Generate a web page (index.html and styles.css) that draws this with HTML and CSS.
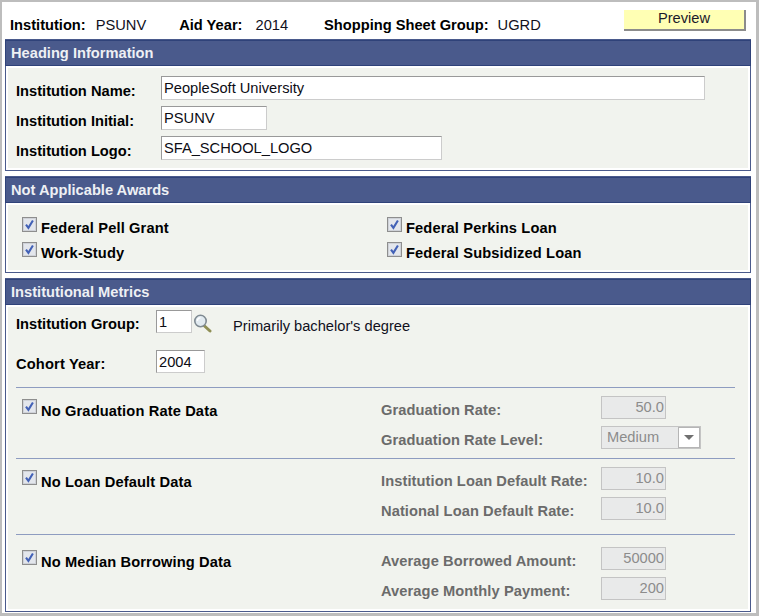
FILE: index.html
```html
<!DOCTYPE html>
<html lang="en">
<head>
  <meta charset="UTF-8" />
  <title>Shopping Sheet</title>
  <link rel="stylesheet" href="styles.css">
</head>
<body>
<svg width="0" height="0" class="defs">
  <symbol id="check" viewBox="0 0 15 15">
    <rect x="0.5" y="0.5" width="14" height="14" fill="#e3e6ec" stroke="#8e8e8e"/>
    <rect x="1.5" y="1.5" width="12" height="12" fill="none" stroke="#cfd2d8"/>
    <path d="M4 7.6l2.4 3.2 4.5-7.3" fill="none" stroke="#4261b6" stroke-width="2.1"/>
  </symbol>
</svg>

<div class="page">
  <!-- top line -->
  <div class="topbar">
    <b class="t-inst">Institution:</b><span class="t-val1">PSUNV</span>
    <b class="t-aid">Aid Year:</b><span class="t-val2">2014</span>
    <b class="t-group">Shopping Sheet Group:</b><span class="t-val3">UGRD</span>
    <div class="btn-preview">Preview</div>
  </div>

  <!-- Heading Information -->
  <div class="section">
    <div class="section-head">Heading Information</div>
    <div class="section-body heading-body">
      <div class="row"><label>Institution Name:</label><span class="field w-name">PeopleSoft University</span></div>
      <div class="row"><label>Institution Initial:</label><span class="field w-initial">PSUNV</span></div>
      <div class="row"><label>Institution Logo:</label><span class="field w-logo">SFA_SCHOOL_LOGO</span></div>
    </div>
  </div>

  <!-- Not Applicable Awards -->
  <div class="section">
    <div class="section-head">Not Applicable Awards</div>
    <div class="section-body awards-body">
      <div class="check"><svg class="box"><use href="#check"/></svg><b>Federal Pell Grant</b></div>
      <div class="check"><svg class="box"><use href="#check"/></svg><b>Federal Perkins Loan</b></div>
      <div class="check"><svg class="box"><use href="#check"/></svg><b>Work-Study</b></div>
      <div class="check"><svg class="box"><use href="#check"/></svg><b>Federal Subsidized Loan</b></div>
    </div>
  </div>

  <!-- Institutional Metrics -->
  <div class="section last">
    <div class="section-head">Institutional Metrics</div>
    <div class="section-body metrics-body">
      <div class="row group-row">
        <label>Institution Group:</label>
        <span class="field w-group">1</span>
        <svg class="lookup" width="20" height="20" viewBox="0 0 20 20">
          <path d="M10.5 13l5.5 5" stroke="#8f8f55" stroke-width="3" stroke-linecap="round"/>
          <circle cx="6.5" cy="8" r="5.7" fill="#e2ebf1" stroke="#7f8a92" stroke-width="1.6"/>
          <path d="M3.4 8a3.1 3.1 0 0 1 3.1-3.1" fill="none" stroke="#fff" stroke-width="1.4"/>
        </svg>
        <span class="group-desc">Primarily bachelor's degree</span>
      </div>
      <div class="row cohort-row">
        <label>Cohort Year:</label>
        <span class="field w-cohort">2004</span>
      </div>

      <div class="metric first">
        <div class="check"><svg class="box"><use href="#check"/></svg><b>No Graduation Rate Data</b></div>
        <div class="metric-fields">
          <div class="row"><label>Graduation Rate:</label><span class="field off">50.0</span></div>
          <div class="row"><label>Graduation Rate Level:</label>
            <span class="field off select">Medium<i class="drop"><i class="arrow"></i></i></span>
          </div>
        </div>
      </div>

      <div class="metric second">
        <div class="check"><svg class="box"><use href="#check"/></svg><b>No Loan Default Data</b></div>
        <div class="metric-fields">
          <div class="row"><label>Institution Loan Default Rate:</label><span class="field off">10.0</span></div>
          <div class="row"><label>National Loan Default Rate:</label><span class="field off">10.0</span></div>
        </div>
      </div>

      <div class="metric third">
        <div class="check"><svg class="box"><use href="#check"/></svg><b>No Median Borrowing Data</b></div>
        <div class="metric-fields">
          <div class="row"><label>Average Borrowed Amount:</label><span class="field off">50000</span></div>
          <div class="row"><label>Average Monthly Payment:</label><span class="field off">200</span></div>
        </div>
      </div>
    </div>
  </div>
</div>
</body>
</html>
```

FILE: styles.css
```css
* {
  box-sizing: border-box;
}

body {
  margin: 0;
  background: #fff;
  color: #000;
  font-family: "Liberation Sans", Arial, sans-serif;
  font-size: 14.67px;
}

.defs {
  display: block;
  height: 0;
}

.page {
  width: 759px;
  height: 616px;
  border: solid #bdbdbd;
  border-width: 2px 3px 3px 2px;
  overflow: hidden;
}

/* top line */
.topbar {
  height: 37px;
  display: flex;
  align-items: center;
  padding: 8px 0 0 8px;
  white-space: nowrap;
  position: relative;
}

.t-val1 { margin-left: 10px; color: #10101c; }
.t-aid { margin-left: 33px; }
.t-val2 { margin-left: 13px; color: #10101c; }
.t-group { margin-left: 36px; }
.t-val3 { margin-left: 9px; color: #10101c; }

.btn-preview {
  position: absolute;
  left: 622px;
  top: 8px;
  width: 122px;
  height: 21px;
  background: #ffffb4;
  border-right: 2px solid #8c8c8c;
  border-bottom: 2px solid #8c8c8c;
  text-align: center;
  line-height: 17px;
  color: #1a1a2a;
}

/* sections */
.section {
  margin: 0 5px 5px 3px;
  border: 1px solid #4a5a8c;
  background: #fff;
}

.section-head {
  height: 26px;
  margin: 0 -1px;
  padding-left: 5px;
  border: 1px solid #2f4279;
  background: #4a5a8c;
  color: #eef0f4;
  font-weight: bold;
  line-height: 25px;
}

.section-body {
  margin: 2px;
  background: #f1f3ee;
}

.row {
  display: flex;
  align-items: flex-start;
}

.row label {
  font-weight: bold;
  padding-top: 6px;
  line-height: 18px;
}

.field {
  display: block;
  height: 24px;
  padding: 0 1px 0 2px;
  line-height: 22px;
  background: #fff;
  border: 1px solid;
  border-color: #999 #ccc #ccc #999;
  color: #0c0c14;
}

/* heading block */
.heading-body {
  padding: 8px 0 8px 8px;
  height: 100px;
}

.heading-body .row { margin-bottom: 6px; }
.heading-body label { width: 145px; }
.w-name { width: 544px; }
.w-initial { width: 106px; }
.w-logo { width: 281px; }

/* awards */
.awards-body {
  height: 65px;
  padding: 12px 0 0 14px;
  display: grid;
  grid-template-columns: 365px 1fr;
  grid-auto-rows: 25px;
}

.check {
  display: flex;
  align-items: flex-start;
}

.check b {
  margin-left: 4px;
  padding-top: 2px;
  line-height: 18px;
  letter-spacing: 0.13px;
}

.box {
  width: 15px;
  height: 15px;
  flex: none;
}

/* metrics */
.metrics-body {
  height: 302px;
  padding: 3px 13px 0 8px;
}

.group-row label,
.cohort-row label { width: 140px; }

.group-row label { padding-top: 5px; }
.cohort-row label { padding-top: 5px; letter-spacing: 0.15px; }

.w-group { width: 36px; height: 23px; }
.w-cohort { width: 49px; height: 23px; }

.lookup {
  margin: 3px 0 0 2px;
  flex: none;
}

.group-desc {
  margin: 7px 0 0 19px;
  line-height: 18px;
  color: #10101c;
}

.cohort-row { margin-top: 15px; height: 37px; }

.metric {
  display: flex;
  border-top: 1px solid #8e9cc0;
}

.metric.first { height: 71px; padding-top: 8px; }
.metric.second { height: 76px; padding-top: 8px; }
.metric.third { padding-top: 12px; }

.metric > .check {
  width: 365px;
  margin-top: 3px;
  padding-left: 6px;
}

.metric > .check b { padding-top: 3px; }

.metric-fields .row {
  margin-bottom: 7px;
  height: 23px;
}

.metric-fields label {
  width: 220px;
  color: #6b6b6b;
  padding-top: 5px;
  letter-spacing: 0.08px;
}

.field.off {
  width: 65px;
  height: 23px;
  background: #e9eaea;
  color: #8c8c8c;
  text-align: right;
  line-height: 20px;
  border-color: #c4c4c4;
}

.field.select {
  width: 100px;
  position: relative;
  text-align: left;
  padding-left: 5px;
}

.drop {
  position: absolute;
  right: 0;
  top: 0;
  width: 22px;
  height: 21px;
  background: #fff;
  border: 1px solid #b5b5b5;
}

.arrow {
  position: absolute;
  left: 5px;
  top: 7px;
  border: 5px solid transparent;
  border-top: 5px solid #707070;
  border-bottom: 0;
}
```
